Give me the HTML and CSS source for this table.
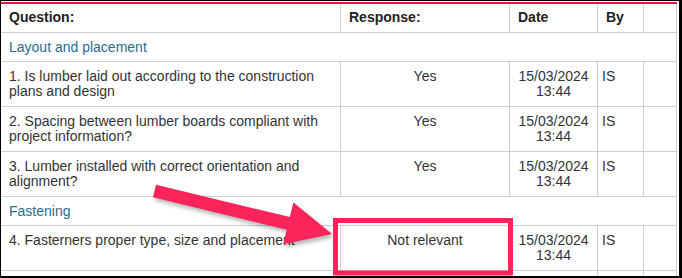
FILE: index.html
```html
<!DOCTYPE html>
<html>
<head>
<meta charset="utf-8">
<link rel="stylesheet" href="styles.css">
</head>
<body>
<div class="frame">
  <div class="grid">
    <div class="cell head">Question:</div>
    <div class="cell head">Response:</div>
    <div class="cell head">Date</div>
    <div class="cell head">By</div>
    <div class="cell head"></div>

    <div class="section">Layout and placement</div>

    <div class="cell q">1. Is lumber laid out according to the construction plans and design</div>
    <div class="cell resp">Yes</div>
    <div class="cell date">15/03/2024<br>13:44</div>
    <div class="cell by">IS</div>
    <div class="cell"></div>

    <div class="cell q">2. Spacing between lumber boards compliant with project information?</div>
    <div class="cell resp">Yes</div>
    <div class="cell date">15/03/2024<br>13:44</div>
    <div class="cell by">IS</div>
    <div class="cell"></div>

    <div class="cell q">3. Lumber installed with correct orientation and alignment?</div>
    <div class="cell resp">Yes</div>
    <div class="cell date">15/03/2024<br>13:44</div>
    <div class="cell by">IS</div>
    <div class="cell"></div>

    <div class="section">Fastening</div>

    <div class="cell q">4. Fasterners proper type, size and placement</div>
    <div class="cell resp">Not relevant</div>
    <div class="cell date">15/03/2024<br>13:44</div>
    <div class="cell by">IS</div>
    <div class="cell"></div>

    <div class="cell q"></div>
    <div class="cell resp"></div>
    <div class="cell date"></div>
    <div class="cell by"></div>
    <div class="cell"></div>
  </div>
  <svg class="annot" width="682" height="278" viewBox="0 0 682 278">
    <polygon class="arrow" points="156,184.7 289.8,217.1 293.4,202.5 332,234 283.2,244.3 286.8,229.7 153,197.3"/>
    <rect class="box" x="335.5" y="220.5" width="175" height="52.5"/>
  </svg>
</div>
</body>
</html>
```
FILE: styles.css
```css
html, body {
  margin: 0;
  padding: 0;
  background: #fff;
}
.frame {
  position: relative;
  box-sizing: border-box;
  width: 682px;
  height: 278px;
  overflow: hidden;
  border-style: solid;
  border-color: #000;
  border-width: 1px 3px 2px 1px;
  padding: 1px 2px 0 0;
  font-family: "Liberation Sans", Arial, sans-serif;
  font-size: 14px;
  color: #333;
}
.grid {
  display: grid;
  grid-template-columns: 340px 169px 88px 46px 33px;
  border-top: 2px solid #e2173f;
}
.cell {
  box-sizing: border-box;
  border-right: 1px solid #cfcfcf;
  border-bottom: 1px solid #cfcfcf;
  padding: 7px 8px;
  line-height: 15px;
  min-height: 45px;
}
.head {
  font-weight: bold;
  color: #222;
  min-height: 29px;
  padding: 6px 8px 7px;
  line-height: 15px;
}
.section {
  grid-column: 1 / -1;
  box-sizing: border-box;
  border-right: 1px solid #cfcfcf;
  border-bottom: 1px solid #cfcfcf;
  padding: 6px 8px;
  line-height: 16px;
  height: 29px;
  color: #2c6d8c;
}
.resp {
  text-align: center;
}
.date {
  text-align: center;
  padding-left: 2px;
  padding-right: 2px;
}
.by {
  padding-left: 4px;
}
.annot {
  position: absolute;
  left: -1px;
  top: -1px;
  pointer-events: none;
}
.arrow {
  fill: #f9245a;
  filter: drop-shadow(2px 3px 2px rgba(0, 0, 0, 0.3));
}
.box {
  fill: none;
  stroke: #f9245a;
  stroke-width: 5;
}
```
